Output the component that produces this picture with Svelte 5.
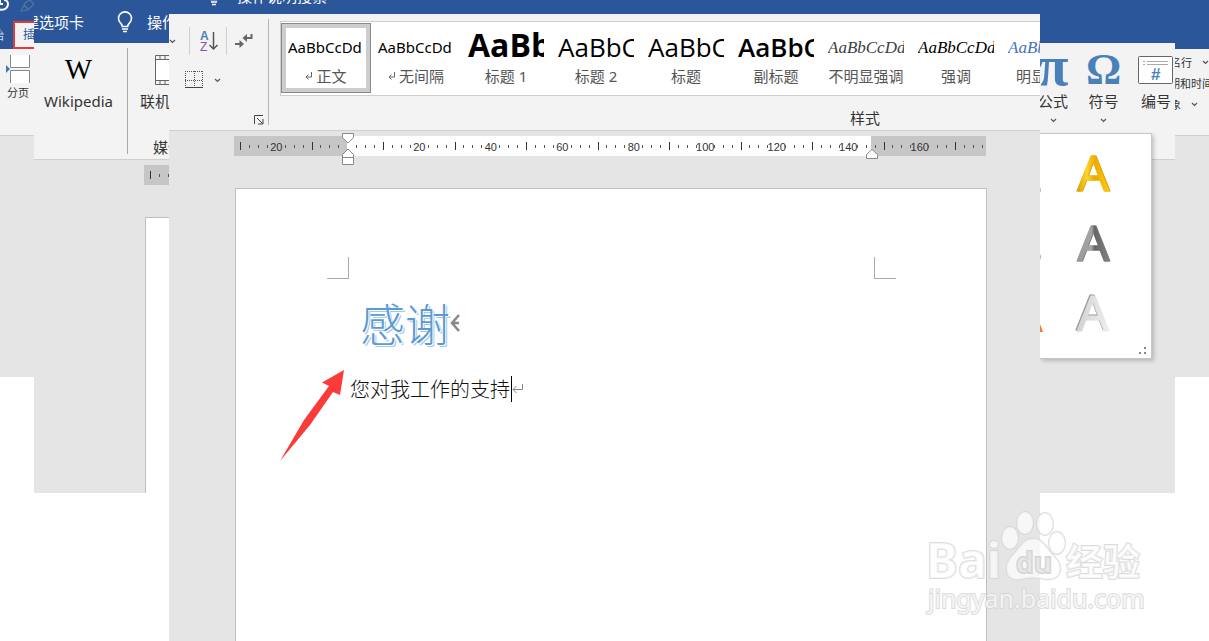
<script>
  const styles = [
    { sample: 'AaBbCcDd', name: '正文', kind: 'body', mark: true, selected: true },
    { sample: 'AaBbCcDd', name: '无间隔', kind: 'body', mark: true },
    { sample: 'AaBb', name: '标题 1', kind: 'h1' },
    { sample: 'AaBbC', name: '标题 2', kind: 'h2' },
    { sample: 'AaBbC', name: '标题', kind: 'h2' },
    { sample: 'AaBbC', name: '副标题', kind: 'sub' },
    { sample: 'AaBbCcDd', name: '不明显强调', kind: 'subtle' },
    { sample: 'AaBbCcDd', name: '强调', kind: 'em' },
    { sample: 'AaBbCcDd', name: '明显强调', kind: 'strong' }
  ];
  const ticks = Array.from({ length: 84 }, (_, i) => i - 12).map((n) => ({
    label: n !== 0 && n % 8 === 0 ? String(Math.abs(n) * 2.5) : '',
    big: n % 8 !== 0 && n % 4 === 0,
    none: n === 0
  }));
  const arts = ['gold', 'steel', 'silver'];
</script>

{#snippet chevron()}
  <svg class="chev" viewBox="0 0 7 5" width="7" height="5" aria-hidden="true"><path d="M1 1l2.5 2.5L6 1" fill="none" stroke="#555" stroke-width="1.2" /></svg>
{/snippet}

{#snippet bulb()}
  <svg class="bulb" viewBox="0 0 16 22" width="16" height="22" aria-hidden="true">
    <path d="M5.3 15.5c0-3-3.8-4-3.8-8.1a6.500 6.500 0 0 1 13 0c0 4.100-3.800 5.100-3.800 8.100z" fill="none" stroke="#fff" stroke-width="1.6" />
    <path d="M5 18h6M6 20.500h4" stroke="#fff" stroke-width="1.600" />
  </svg>
{/snippet}

<div class="stage">
  <section class="pane outer">
    <header class="tall left-tabs">
      <div class="quick">
        <svg viewBox="0 0 34 12" width="34" height="12" aria-hidden="true">
          <path d="M0 9.500c5 1 8-2 8-5.500S5 0 4 0M0 0v4h3" fill="none" stroke="#fff" stroke-width="2" />
          <path d="M21 11l4-8 5-3 4 4-6 6zM24 5l5 5" fill="none" stroke="#55749f" stroke-width="1.200" />
        </svg>
      </div>
      <div class="tabs"><button class="home">始</button><button class="insert">插</button></div>
    </header>
    <div class="ribbon short breaks">
      <button class="stack">
        <svg viewBox="0 0 26 29" width="26" height="29" aria-hidden="true">
          <path d="M5.500 0v12.500h19V0M5.500 28V15.500h19V28" fill="#fff" stroke="#888" />
          <path d="M1 10l4 4-4 4z" fill="#3b78bd" />
        </svg>
        分页
      </button>
    </div>
  </section>

  <section class="pane inner">
    <header class="mid command">
      <div class="clipleft"><span>建选项卡</span></div>
      {@render bulb()}
      <span class="tell">操作</span>
    </header>
    <div class="ribbon full media">
      <button class="wiki"><span class="w">W</span>Wikipedia</button>
      <div class="film">
        <button>
          <svg viewBox="0 0 14 32" width="14" height="32" aria-hidden="true">
            <path d="M14 1.500H.500v29H14M14 5.500H.500M14 26.500H.500M5 1.500v4M10 1.500v4M5 26.500v4M10 26.500v4" fill="none" stroke="#666" />
            <path d="M1 6h14v20H1z" fill="#fff" />
          </svg>
          <span>联机</span>
        </button>
        <span class="group">媒体</span>
      </div>
    </div>
    <div class="side-ruler"><i class="big"></i><i></i><i></i></div>
    <div class="side-page"></div>
  </section>

  <main class="pane front">
    <header class="slim">
      {@render bulb()}
      <span>操作说明搜索</span>
    </header>
    <div class="ribbon full tools">
      <div class="para">
        <div class="row">
          <button aria-label="更多">{@render chevron()}</button>
          <button class="ruled" aria-label="排序">
            <svg viewBox="0 0 20 24" width="20" height="24" aria-hidden="true">
              <text x="1" y="11" class="az" fill="#4a80ba">A</text>
              <text x="1" y="22" class="az z" fill="#8b50a5">Z</text>
              <path d="M14.500 3v17M10.500 16l4 4 4-4" fill="none" stroke="#555" stroke-width="1.500" />
            </svg>
          </button>
          <button aria-label="显示编辑标记">
            <svg viewBox="0 0 18 16" width="18" height="16" aria-hidden="true">
              <path d="M16.500 1v4H9" fill="none" stroke="#666" stroke-width="2" />
              <path d="M12 1v8L7.500 5zM4.500 7v8L9 11z" fill="#666" />
              <path d="M0 11h6" stroke="#666" stroke-width="2" />
            </svg>
          </button>
        </div>
        <div class="row second">
          <button aria-label="边框">
            <svg viewBox="0 0 18 18" width="18" height="18" aria-hidden="true">
              <path d="M0 .500h18M0 9.500h18M.500 0v17M9.500 0v17M17.500 0v17" fill="none" stroke="#555" stroke-dasharray="1 1" />
              <path d="M0 16.500h18" stroke="#444" />
            </svg>
          </button>
          <button aria-label="边框选项">{@render chevron()}</button>
        </div>
        <button class="launcher" aria-label="段落设置">
          <svg viewBox="0 0 10 10" width="10" height="10" aria-hidden="true"><path d="M.500 9V.500H9M3 3l5.500 5.500M9 4v5H4" fill="none" stroke="#444" /></svg>
        </button>
      </div>
      <div class="styles">
        <div class="gallery">
          {#each styles as s}
            <button class="style" class:selected={s.selected}>
              <span class="sample {s.kind}">{s.sample}</span>
              <span class="name">
                {#if s.mark}<svg viewBox="0 0 7 8" width="7" height="8" aria-hidden="true"><path d="M6.500 0v5H1M3.500 2.500L1 5l2.500 2.500" fill="none" stroke="#666" /></svg>{/if}
                {s.name}
              </span>
            </button>
          {/each}
        </div>
        <div class="caption">样式</div>
      </div>
    </div>

    <div class="work">
      <div class="ruler">
        {#each ticks as t}
          <i class:big={t.big} class:num={t.label} class:none={t.none}>{#if t.label}<b>{t.label}</b>{/if}</i>
        {/each}
        <svg class="indent" viewBox="0 0 12 32" width="12" height="32" aria-hidden="true">
          <path d="M.500.500h11v4L6 10 .500 4.500zM.500 31.500v-10L6 16l5.500 5.500v10zM.500 24.500h11" fill="#fff" stroke="#888" />
        </svg>
        <svg class="edge" viewBox="0 0 12 10" width="12" height="10" aria-hidden="true">
          <path d="M.500 9.500v-4L6 .500l5.500 5v4z" fill="#fff" stroke="#888" />
        </svg>
      </div>
      <article class="page">
        <div class="crops"><i></i><i class="r"></i></div>
        <div class="words">
          <h1>感谢<svg viewBox="0 0 10 18" width="10" height="18" aria-hidden="true"><path d="M9 1L2 9l7 8M2 9h7" fill="none" stroke="#888" stroke-width="2.500" /></svg></h1>
          <p>您对我工作的支持<i class="caret"></i><svg viewBox="0 0 11 10" width="11" height="10" aria-hidden="true"><path d="M10.500 0v5.500H1M4.500 2L1 5.500 4.500 9" fill="none" stroke="#888" /></svg></p>
        </div>
        <svg class="arrow" viewBox="0 0 66 92" width="66" height="92" aria-hidden="true">
          <path d="M64 0L42 12.500l7 3.500L24 50 0 91 30 55 53 22l7 3z" fill="#fb3a3a" />
        </svg>
      </article>
    </div>
  </main>

  <section class="pane inner">
    <header class="mid"></header>
    <div class="ribbon full symbols">
      <button class="pi"><span class="glyph">π</span><span>公式</span>{@render chevron()}</button>
      <button><span class="glyph">Ω</span><span>符号</span>{@render chevron()}</button>
      <button>
        <span class="glyph">
          <svg viewBox="0 0 36 30" width="36" height="30" aria-hidden="true">
            <rect x=".5" y="1.500" width="34" height="27" rx="1" fill="#fff" stroke="#666" />
            <path d="M5 6.500h2M9 6.500h21M5 9.500h2M9 9.500h21" stroke="#aaa" />
            <text x="13" y="25" class="hash">#</text>
          </svg>
        </span>
        <span>编号</span>
      </button>
    </div>
    <div class="menu">
      {#each arts as a}
        <button class="art" aria-label="艺术字">
          <svg viewBox="0 0 44 48" width="44" height="48" aria-hidden="true">
            <defs>
              <linearGradient id="gold" x1="0" x2="1"><stop offset="0" stop-color="#d79c00" /><stop offset=".3" stop-color="#ffd52c" /><stop offset=".55" stop-color="#e8ad00" /><stop offset="1" stop-color="#ffca10" /></linearGradient>
              <linearGradient id="steel" x1="0" x2="1"><stop offset="0" stop-color="#9a9a9a" /><stop offset=".45" stop-color="#a5a5a5" /><stop offset=".55" stop-color="#666" /><stop offset="1" stop-color="#818181" /></linearGradient>
              <linearGradient id="silver" x1="0" x2="1"><stop offset="0" stop-color="#d2d2d2" /><stop offset="1" stop-color="#eee" /></linearGradient>
            </defs>
            <text x="22" y="43" text-anchor="middle" class="letter {a}" fill="url(#{a})" stroke="url(#{a})">A</text>
          </svg>
        </button>
      {/each}
      <svg class="scraps" viewBox="0 0 4 160" width="4" height="160" aria-hidden="true">
        <path d="M0 7q2 3 0 6" fill="#bbb" /><path d="M0 74q2 3 0 6" fill="#9db5dc" /><path d="M0 144l3 8H0z" fill="#ed7d31" />
      </svg>
      <svg class="grip" viewBox="0 0 8 8" width="8" height="8" aria-hidden="true"><path d="M5 0h2v2H5zM5 5h2v2H5zM0 5h2v2H0z" fill="#888" /></svg>
    </div>
  </section>

  <section class="pane outer">
    <header class="tall"></header>
    <div class="ribbon short fields">
      <button><span class="cut one">名行</span>{@render chevron()}</button>
      <button><span class="cut two">期和时间</span></button>
      <button><span class="cut three">象</span>{@render chevron()}</button>
    </div>
  </section>

  <svg class="mark" viewBox="0 0 222 108" width="222" height="108" aria-hidden="true">
    <g class="ink">
      <text x="1" y="71" class="bai">Bai</text>
      <g>
        <ellipse cx="85" cy="31" rx="8" ry="11" /><ellipse cx="100" cy="16" rx="8" ry="11" /><ellipse cx="120" cy="17" rx="8" ry="11" /><ellipse cx="132" cy="36" rx="8" ry="11" />
        <path d="M108 32c-10 0-13 9-19 15-5 5-8 10-7 17 1 8 8 9 14 8 8-2 16-2 24 0 8 1 14-1 15-9 1-8-4-11-9-17s-8-14-18-14z" />
      </g>
      <text x="91" y="66" class="du">du</text>
      <text x="141" y="69" class="jing">经验</text>
      <text x="3" y="101" class="url">jingyan.baidu.com</text>
    </g>
  </svg>
</div>

<style>
  :global(body) { margin: 0; background: #fff; }
  .stage {
    position: relative;
    display: grid;
    grid-template-columns: 34px 135px minmax(0, 1fr) 135px 34px;
    align-items: start;
    min-height: 100vh;
    overflow: hidden;
    font-family: "Noto Sans", "Noto Sans CJK SC", sans-serif;
    font-size: 15px;
    line-height: 20px;
    color: #333;
  }
  .pane { position: relative; min-width: 0; overflow: hidden; background: #e5e5e5; box-sizing: border-box; }
  .outer { min-height: 377px; }
  .inner { min-height: 493px; }
  .front { min-height: 100vh; display: flex; flex-direction: column; }
  header { background: #2b579a; color: #fff; overflow: hidden; }
  .tall { height: 49px; }
  .mid { height: 43px; }
  .slim { height: 14px; }
  button { font: inherit; color: inherit; background: none; border: 0; padding: 0; margin: 0; white-space: nowrap; }
  svg { display: block; flex: none; }
  .ribbon { background: #f3f3f3; border-bottom: 1px solid #cfcfcf; box-sizing: border-box; overflow: hidden; }
  .short { height: 87px; }
  .full { height: 117px; }

  .quick { height: 21px; }
  .tabs { display: flex; font-size: 12px; }
  .home { width: 13px; display: flex; justify-content: flex-end; padding: 5px 9px 0 0; box-sizing: border-box; color: #cfe0f7; height: 28px; }
  .insert { flex: none; height: 28px; width: 40px; text-align: left; border: 2px solid #e03c3c; padding-left: 8px; background: #f3f3f3; color: #2b579a; box-sizing: border-box; }
  .breaks { padding: 6px 0 0 5px; font-size: 11px; line-height: 18px; }
  .stack { display: flex; flex-direction: column; align-items: center; }

  .command { display: flex; align-items: center; }
  .clipleft { width: 50px; overflow: hidden; display: flex; justify-content: flex-end; white-space: nowrap; flex: none; margin-right: 33px; }
  .tell { margin-left: 14px; white-space: nowrap; }
  .media { display: flex; padding-top: 5px; }
  .wiki { flex: none; width: 94px; height: 106px; border-right: 1px solid #aaa; display: flex; flex-direction: column; align-items: center; padding-right: 4px; box-sizing: border-box; }
  .w { font: 29px/43px "Liberation Serif", serif; color: #000; }
  .film { padding-left: 12px; display: flex; flex-direction: column; flex: 1; min-width: 0; }
  .film button { display: flex; flex-direction: column; align-items: flex-start; gap: 5px; padding-top: 6px; }
  .film svg { margin-left: 15px; }
  .group { margin: 26px 0 0 13px; white-space: nowrap; }
  .side-ruler { margin: 5px 0 0 110px; height: 20px; background: #c6c6c6; display: flex; align-items: center; gap: 8px; padding-left: 6px; }
  .side-page { margin: 32px 0 0 111px; height: 275px; background: #fff; border: solid #bfbfbf; border-width: 1px 0 0 1px; }

  .slim { display: flex; align-items: flex-end; padding: 0 0 0 37px; gap: 15px; box-sizing: border-box; }
  .slim .bulb, .slim span { margin-bottom: 8px; white-space: nowrap; }
  .tools { display: flex; padding-top: 5px; }
  .para { flex: none; width: 100px; height: 106px; box-sizing: border-box; border-right: 1px solid #b5b5b5; display: flex; flex-direction: column; }
  .row { display: flex; align-items: center; height: 28px; margin-top: 8px; }
  .ruled { border: solid #d0d0d0; border-width: 0 1px; height: 28px; padding: 0 7px 0 9px; margin: 0 8px 0 13px; }
  .second { padding-left: 16px; gap: 11px; height: 20px; margin-top: 15px; }
  .launcher { align-self: flex-end; margin: auto 4px 0 0; }
  .az { font: bold 12px "Liberation Sans", sans-serif; }
  .az.z { font-weight: 400; }
  .styles { flex: 1; min-width: 0; padding: 2px 0 0 11px; }
  .gallery { display: flex; height: 73px; border: 1px solid #cfcfcf; border-right: 0; background: #fff; overflow: hidden; align-items: flex-start; padding-top: 1px; box-sizing: content-box; height: 72px; }
  .style { flex: none; width: 90px; height: 70px; box-sizing: border-box; padding: 6px; display: flex; flex-direction: column; align-items: center; }
  .selected { border: 1px solid #888; padding: 5px; box-shadow: inset 0 0 0 4px #cdcdcd; }
  .sample { width: 76px; height: 37px; overflow: hidden; line-height: 36px; text-align: left; color: #000; font-size: 15px; }
  .sample.h1 { font: 700 32px/32px "Open Sans", sans-serif; }
  .sample.h2 { font: 400 26px/36px "Open Sans", sans-serif; }
  .sample.sub { font: 600 26px/36px "Open Sans", sans-serif; }
  .sample.subtle, .sample.em, .sample.strong { font: italic 17px/37px "Liberation Serif", serif; }
  .sample.subtle { color: #404040; }
  .sample.strong { color: #4472c4; }
  .name { display: flex; align-items: center; gap: 4px; color: #555; }
  .caption { padding-top: 12px; margin-left: 410px; text-align: center; }

  .work { flex: 1; display: flex; flex-direction: column; padding: 5px 53px 0 65px; }
  .ruler { position: relative; height: 20px; flex: none; margin-right: 1px; display: flex; align-items: center; justify-content: space-between; padding: 0 2px 0 6px; background: linear-gradient(to right, #c6c6c6 113px, transparent 113px calc(100% - 115px), #c6c6c6 calc(100% - 115px)) #fff; }
  .ruler i, .side-ruler i { width: 1px; height: 3px; background: #555; display: flex; align-items: center; justify-content: center; }
  .ruler i.big, .side-ruler i.big { height: 8px; background: #333; }
  .ruler i.num, .ruler i.none { background: none; }
  b { font: 11px/12px "Liberation Sans", sans-serif; color: #333; padding-top: 1px; }
  .indent { position: absolute; left: 108px; top: -3px; }
  .edge { position: absolute; right: 108px; top: 13px; }
  .page { position: relative; flex: 1; margin: 32px 0 0 1px; background: #fff; border: solid #bfbfbf; border-width: 1px 1px 0; }
  .crops { display: flex; justify-content: space-between; padding: 68px 90px 0 91px; }
  .crops i { width: 21px; height: 21px; border: solid #aaa; border-width: 0 1px 1px 0; }
  .crops i.r { border-width: 0 0 1px 1px; }
  .words { padding-left: 114px; }
  h1 { margin: 14px 0 0 10px; display: flex; align-items: center; font-size: 45px; line-height: 60px; font-weight: 300; color: #5b9bd5; text-shadow: 1px 1px 0 #fff, 2px 2px 0 #a4c8e9; font-family: "Noto Sans CJK SC", sans-serif; }
  p { margin: 21px 0 0; display: flex; align-items: center; font-size: 20px; line-height: 30px; font-weight: 300; color: #111; font-family: "Noto Sans CJK SC", sans-serif; }
  .caret { width: 1px; height: 26px; margin-left: 1px; background: #000; }
  .arrow { position: absolute; left: 44px; top: 181px; }

  .symbols { display: grid; grid-template-columns: 38px 51px 54px; padding-top: 5px; }
  .symbols button { display: flex; flex-direction: column; align-items: center; }
  .symbols .chev { margin-top: 7px; }
  .symbols .pi { margin-left: -12px; }
  .glyph { height: 43px; font: bold 44px/43px "Liberation Serif", serif; color: #4a80ba; display: flex; align-items: center; }
  .pi .glyph { font-size: 56px; line-height: 36px; align-items: flex-start; }
  .hash { font: bold 17px "Liberation Sans", sans-serif; fill: #4a80ba; }
  .menu { position: absolute; left: 0; top: 133px; width: 112px; height: 226px; box-sizing: border-box; background: #fff; border: solid #c6c6c6; border-width: 1px 1px 1px 0; box-shadow: 2px 2px 4px #0003; display: flex; flex-direction: column; align-items: flex-start; padding: 14px 0 0 31px; gap: 22px; }
  .letter { font: 400 50px "Noto Sans", sans-serif; stroke-width: 1px; stroke-linejoin: round; }
  .steel { filter: drop-shadow(1px 0 0 #777); }
  .gold { filter: drop-shadow(1px 0 0 #d99e00); }
  .silver { filter: drop-shadow(-1px -1px 0 #999); }
  .scraps { position: absolute; left: 0; top: 46px; }
  .grip { position: absolute; right: 4px; bottom: 3px; }

  .fields { font-size: 11px; display: flex; flex-direction: column; padding-top: 3px; }
  .fields button { display: flex; align-items: center; height: 21px; gap: 10px; }
  .cut { overflow: hidden; display: flex; justify-content: flex-end; flex: none; }
  .one { width: 17px; }
  .two { width: 38px; }
  .three { width: 6px; }

  .mark { position: absolute; right: 62px; bottom: 26px; }
  .ink { fill: #fff; fill-opacity: .7; stroke: #d4d4d4; stroke-width: 2px; stroke-opacity: .8; paint-order: stroke; }
  .bai { font: 700 48px "Noto Sans", sans-serif; }
  .du { font: 700 28px "Open Sans", sans-serif; fill: #e2e2e2; stroke: #c8c8c8; }
  .jing { font: 700 37px "Noto Sans CJK SC", sans-serif; }
  .url { font: 25px "Noto Sans", sans-serif; }
</style>
